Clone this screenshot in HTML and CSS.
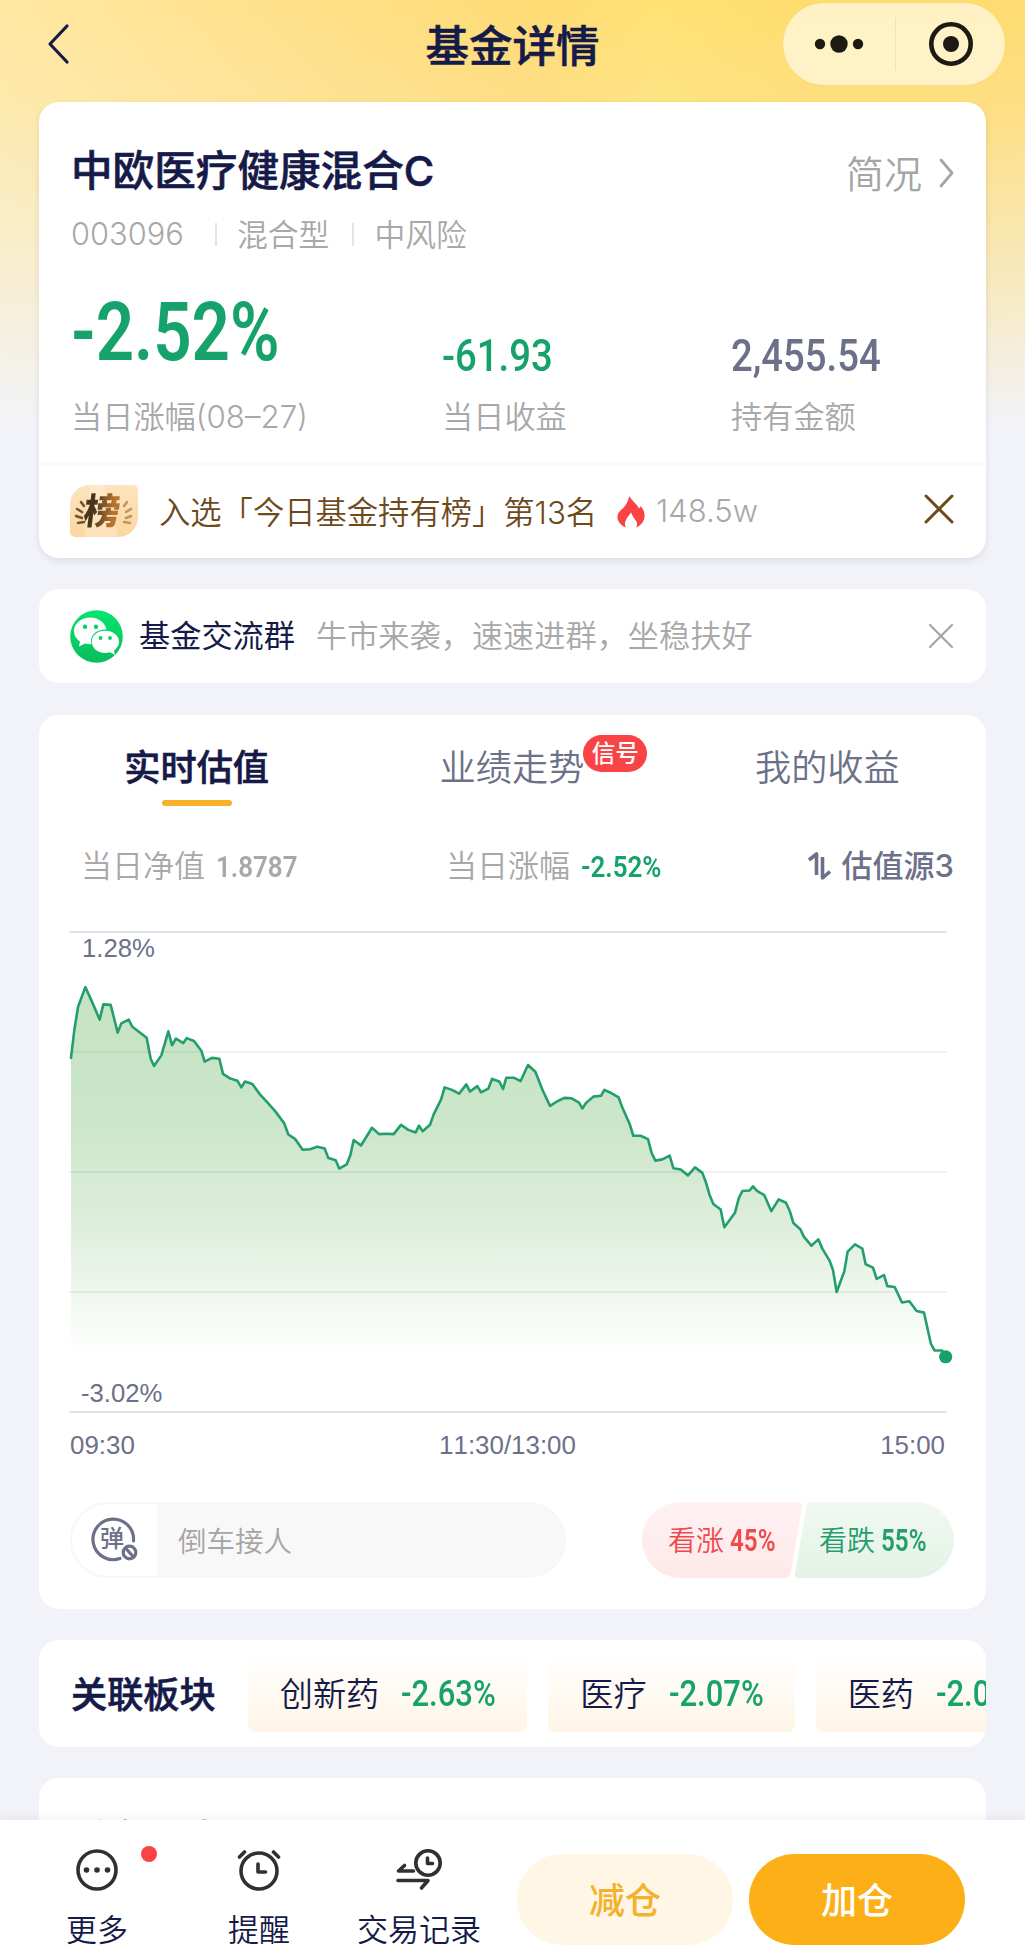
FILE: index.html
```html
<!DOCTYPE html>
<html lang="zh-CN">
<head>
<meta charset="utf-8">
<title>基金详情</title>
<link rel="stylesheet" href="styles.css">
</head>
<body>
<div class="screen">
  <div class="content">
    <header class="nav">
      <svg class="back" width="24" height="42" viewBox="0 0 24 42"><path d="M21 3 4 21 21 39"/></svg>
      <h1>基金详情</h1>
      <div class="capsule">
        <svg width="50" height="24" viewBox="0 0 50 24"><circle cx="6" cy="12" r="5.2"/><circle cx="25" cy="12" r="8.7"/><circle cx="44" cy="12" r="5.2"/></svg>
        <i></i>
        <svg width="46" height="46" viewBox="0 0 46 46"><circle class="ring" cx="23" cy="23" r="19.7"/><circle cx="23" cy="23" r="8"/></svg>
      </div>
    </header>

    <section class="card summary">
      <div class="fund">
        <div class="fund-head">
          <h2>中欧医疗健康混合C</h2>
          <a class="brief">简况<svg width="16" height="30" viewBox="0 0 16 30"><path d="M2 2 13 15 2 28"/></svg></a>
        </div>
        <div class="tags"><span class="code">003096</span><span>混合型</span><span>中风险</span></div>
        <div class="figures">
          <div><b class="num big green">-2.52%</b><span>当日涨幅(08–27)</span></div>
          <div><b class="num mid green">-61.93</b><span>当日收益</span></div>
          <div><b class="num mid slate">2,455.54</b><span>持有金额</span></div>
        </div>
      </div>
      <div class="rank">
        <span class="rank-badge">
          <svg width="68" height="52" viewBox="0 0 68 52">
            <path class="shine" d="M20 0H34L48 52H14Z"/>
            <g class="laurel-l"><path d="M11 17 14 21"/><path d="M7 24 12 27"/><path d="M6 31 12 33"/><path d="M8 38 14 37"/></g>
            <g class="laurel-r"><path d="M57 17 54 21"/><path d="M61 24 56 27"/><path d="M61 31 56 33"/><path d="M60 38 54 37"/></g>
          </svg>
          <em>榜</em>
        </span>
        <span class="rank-text">入选「今日基金持有榜」第13名</span>
        <svg class="flame" width="28" height="32" viewBox="0 0 28 32"><path d="M12.500 0C14.500 5 20 7.500 22 12.500C22.800 12 23.300 11 23.500 10C26.500 13 28 17.500 27.500 21C27 26 23.500 29.500 19.500 31.500C20.500 28 20 25.500 18 23.500C17 22 15.500 20 14 16.500C12 20 8.500 23 8 26.500C7.800 28.500 8.200 30.500 9 31.500C3.500 29.500 0 25 .5 20C1 15 6.500 13 9 8.500C10.800 5.500 11.500 3 12.500 0Z"/></svg>
        <span class="heat">148.5w</span>
        <svg class="close brown" width="30" height="30" viewBox="0 0 30 30"><path d="M2 2 28 28M28 2 2 28"/></svg>
      </div>
    </section>

    <section class="card group">
      <svg width="53" height="53" viewBox="0 0 53 53">
        <defs><linearGradient id="wx" x1="0" y1="0" x2="0" y2="1"><stop offset="0" stop-color="#05e56f"/><stop offset="1" stop-color="#08bd5b"/></linearGradient></defs>
        <circle cx="26.500" cy="26.500" r="26.300" fill="url(#wx)"/>
        <path fill="#fff" d="M20.500 7.500C11 7.500 4 13.500 4 21C4 25.500 6.500 29 10 31.500L9 36.500 15 33.500C17 34 19 34.500 21.500 34.300C19 26 26 19 36.500 19.500C35 12.500 28.500 7.500 20.500 7.500Z"/>
        <path fill="#fff" d="M35 20.800C27.500 20.800 21.800 25.500 21.800 31.800C21.800 38 27.500 43 35 43C36.500 43 38.500 42.700 40 42.200L45 45 44 40.500C47 38.500 49 35.500 49 31.800C49 25.500 43 20.800 35 20.800Z"/>
        <g fill="#08cf64"><circle cx="15" cy="16.800" r="2.200"/><circle cx="26" cy="16.800" r="2.200"/><circle cx="30.500" cy="28" r="1.900"/><circle cx="40" cy="28" r="1.900"/></g>
      </svg>
      <strong>基金交流群</strong>
      <span>牛市来袭，速速进群，坐稳扶好</span>
      <svg class="close grey" width="26" height="26" viewBox="0 0 26 26"><path d="M2 2 24 24M24 2 2 24"/></svg>
    </section>

    <section class="card quote">
      <nav class="tabs">
        <a class="active">实时估值</a>
        <a>业绩走势<sup>信号</sup></a>
        <a>我的收益</a>
      </nav>
      <div class="stats">
        <span class="nav-value">当日净值<b class="num small">1.8787</b></span>
        <span class="change">当日涨幅<b class="num small green">-2.52%</b></span>
        <span class="source"><svg width="25" height="30" viewBox="0 0 25 30"><path d="M2 9 9.500 3V24M15.500 6V27L23 20.500"/></svg>估值源3</span>
      </div>
      <div class="chart">
        <span>1.28%</span>
        <span>-3.02%</span>
        <svg width="876" height="480" viewBox="210 267 2628 1140" preserveAspectRatio="none">
          <defs>
            <linearGradient id="area" gradientUnits="userSpaceOnUse" x1="0" y1="398" x2="0" y2="1276"><stop offset="0" stop-color="#c5e3c3"/><stop offset=".35" stop-color="#cbe6c9"/><stop offset=".62" stop-color="#dcedda"/><stop offset="1" stop-color="#fff"/></linearGradient>
          </defs>
          <path fill="url(#area)" d="M213 566L223 500 234 445 256 398 278 436 299 475 310 439 332 440 353 506 364 484 386 475 397 492 440 518 452 568 462 585 484 560 505 503 516 536 528 520 550 531 560 519 582 526 604 549 614 575 636 566 658 568 669 604 691 615 712 620 724 636 735 622 757 628 779 652 800 670 826 693 853 722 865 748 886 759 908 784 930 783 952 777 974 781 985 804 1007 809 1018 829 1040 819 1051 797 1061 761 1083 774 1116 732 1137 747 1160 746 1181 747 1203 725 1225 737 1247 743 1257 727 1268 740 1290 725 1301 700 1323 665 1334 636 1356 642 1377 651 1399 629 1410 646 1432 633 1443 648 1465 639 1476 616 1498 622 1509 640 1519 613 1541 613 1562 621 1584 583 1606 599 1628 643 1650 680 1672 669 1693 661 1715 662 1737 672 1747 686 1758 673 1780 658 1803 656 1813 642 1835 650 1856 660 1867 684 1889 723 1900 751 1922 751 1944 759 1955 792 1966 810 1987 807 2009 798 2020 828 2042 831 2064 845 2085 826 2107 839 2118 862 2129 892 2140 913 2162 926 2173 968 2205 934 2216 900 2227 882 2249 881 2259 871 2271 882 2293 892 2314 930 2336 902 2358 910 2369 929 2380 958 2401 973 2412 991 2434 1012 2455 997 2467 1019 2489 1048 2499 1070 2510 1122 2533 1073 2543 1026 2565 1009 2587 1019 2597 1056 2619 1064 2630 1091 2652 1082 2662 1108 2684 1110 2706 1147 2728 1144 2750 1167 2772 1171 2793 1246 2804 1261 2826 1261 2837 1276H213Z"/>
          <path class="edge" d="M210 267H2838M210 1407H2838"/>
          <path class="grid" d="M210 552H2838M210 837H2838M210 1122H2838"/>
          <path class="line" d="M213 566L223 500 234 445 256 398 278 436 299 475 310 439 332 440 353 506 364 484 386 475 397 492 440 518 452 568 462 585 484 560 505 503 516 536 528 520 550 531 560 519 582 526 604 549 614 575 636 566 658 568 669 604 691 615 712 620 724 636 735 622 757 628 779 652 800 670 826 693 853 722 865 748 886 759 908 784 930 783 952 777 974 781 985 804 1007 809 1018 829 1040 819 1051 797 1061 761 1083 774 1116 732 1137 747 1160 746 1181 747 1203 725 1225 737 1247 743 1257 727 1268 740 1290 725 1301 700 1323 665 1334 636 1356 642 1377 651 1399 629 1410 646 1432 633 1443 648 1465 639 1476 616 1498 622 1509 640 1519 613 1541 613 1562 621 1584 583 1606 599 1628 643 1650 680 1672 669 1693 661 1715 662 1737 672 1747 686 1758 673 1780 658 1803 656 1813 642 1835 650 1856 660 1867 684 1889 723 1900 751 1922 751 1944 759 1955 792 1966 810 1987 807 2009 798 2020 828 2042 831 2064 845 2085 826 2107 839 2118 862 2129 892 2140 913 2162 926 2173 968 2205 934 2216 900 2227 882 2249 881 2259 871 2271 882 2293 892 2314 930 2336 902 2358 910 2369 929 2380 958 2401 973 2412 991 2434 1012 2455 997 2467 1019 2489 1048 2499 1070 2510 1122 2533 1073 2543 1026 2565 1009 2587 1019 2597 1056 2619 1064 2630 1091 2652 1082 2662 1108 2684 1110 2706 1147 2728 1144 2750 1167 2772 1171 2793 1246 2804 1261 2826 1261 2837 1276"/>
          <ellipse cx="2837" cy="1276" rx="20" ry="15.500" fill="#16a26a"/>
        </svg>
      </div>
      <div class="times"><span>09:30</span><span>11:30/13:00</span><span>15:00</span></div>
      <div class="actions">
        <div class="danmu">
          <span class="danmu-icon">
            <svg width="50" height="50" viewBox="0 0 50 50"><path d="M31 43.500A20.300 20.300 0 1 1 44.500 26"/><circle cx="40.500" cy="37.500" r="6.300"/><path d="M36.500 33 44.500 42"/></svg>
            <em>弹</em>
          </span>
          <span class="hint">倒车接人</span>
        </div>
        <div class="votes">
          <svg width="312" height="76" viewBox="0 0 312 76">
            <defs>
              <linearGradient id="up" x1="0" y1="0" x2="0" y2="1"><stop offset="0" stop-color="#fff1f2"/><stop offset="1" stop-color="#fee9ea"/></linearGradient>
              <linearGradient id="down" x1="0" y1="0" x2="0" y2="1"><stop offset="0" stop-color="#f1f8f2"/><stop offset="1" stop-color="#e4f2e6"/></linearGradient>
            </defs>
            <path fill="url(#up)" d="M38 0H156Q161 0 160.400 5L148.500 71Q147.500 76 143 76H38A38 38 0 0 1 38 0Z"/>
            <path fill="url(#down)" d="M170 0H274A38 38 0 0 1 274 76H157Q152 76 153 71L164.500 5Q165.500 0 170 0Z"/>
          </svg>
          <span class="up">看涨<b class="num vote">45%</b></span>
          <span class="down">看跌<b class="num vote">55%</b></span>
        </div>
      </div>
    </section>

    <section class="card sectors">
      <h3>关联板块</h3>
      <div class="chip">创新药<b class="num rate green">-2.63%</b></div>
      <div class="chip">医疗<b class="num rate green">-2.07%</b></div>
      <div class="chip">医药<b class="num rate green">-2.05%</b></div>
    </section>

    <section class="card next"><h3>重仓涨跌</h3></section>
  </div>

  <footer class="bar">
    <a class="item more">
      <svg width="44" height="44" viewBox="0 0 44 44"><circle cx="22" cy="22" r="19"/><g class="dots"><circle cx="11.500" cy="22" r="2.800"/><circle cx="22" cy="22" r="2.800"/><circle cx="32.500" cy="22" r="2.800"/></g></svg>
      <i class="dot"></i>更多
    </a>
    <a class="item remind">
      <svg width="44" height="44" viewBox="0 0 44 44"><circle cx="22" cy="23" r="18"/><path d="M21 16V24H28.500M2.500 9 7.500 4M41.500 9 36.500 4"/></svg>
      提醒
    </a>
    <a class="item trades">
      <svg width="48" height="44" viewBox="0 0 48 44"><circle cx="33" cy="15" r="12.200"/><path d="M32.500 10V15.500H37.500M18.500 23H3.500L9.500 17.500M3 32.500H33L26.500 40"/></svg>
      交易记录
    </a>
    <button class="sell">减仓</button>
    <button class="buy">加仓</button>
  </footer>
</div>
</body>
</html>
```
FILE: styles.css
```css
* { box-sizing: border-box; }

body {
  margin: 0;
  font-family: Inter, "Noto Sans CJK SC", sans-serif;
  font-weight: 350;
  color: #161a48;
  background: #f2f3f9;
}

svg { display: block; flex: none; fill: none; stroke-linecap: round; stroke-linejoin: round; }
h1, h2, h3 { margin: 0; font-weight: 500; -webkit-text-stroke: .6px currentColor; }
em { font-style: normal; }

.screen {
  display: flex;
  flex-direction: column;
  height: 1957px;
  overflow: hidden;
  background:
    linear-gradient(180deg, rgba(242, 243, 249, 0) 0, rgba(242, 243, 249, .12) 100px, rgba(242, 243, 249, .6) 290px, #f2f3f9 425px),
    linear-gradient(90deg, #ffe8a2 0, #ffdb74 52%, #ffe173 64%, #ffdc6c 80%, #ffdc71 100%);
}

.content {
  flex: 1;
  min-height: 0;
  overflow: hidden;
  padding: 0 39px;
  display: flex;
  flex-direction: column;
}

.nav {
  height: 102px;
  flex: none;
  display: grid;
  grid-template-columns: 1fr auto 1fr;
  align-items: start;
  margin: 0 -19px;
}
.back { margin: 23px 0 0 26px; stroke: #161a48; stroke-width: 3.2; }
.nav h1 { font-size: 43.500px; line-height: 60px; padding-top: 16px; }
.capsule {
  justify-self: end;
  width: 222px;
  height: 82px;
  margin-top: 3px;
  border-radius: 41px;
  background: rgba(255, 250, 229, .72);
  box-shadow: 0 0 0 1px rgba(240, 214, 130, .25);
  display: flex;
  align-items: center;
  padding: 0 31px;
  justify-content: space-between;
}
.capsule svg { fill: #1d1a14; }
.capsule .ring { fill: none; stroke: #1d1a14; stroke-width: 4.600; }
.capsule i { width: 1.500px; height: 52px; background: #efe3bd; margin-left: -1px; }

.card { flex: none; background: #fff; border-radius: 20px; }

.summary { height: 456px; box-shadow: 0 3px 6px rgba(50, 55, 100, .11); display: flex; flex-direction: column; }
.fund { height: 361px; padding: 40px 31px 0 32px; }
.fund-head { display: flex; justify-content: space-between; align-items: center; height: 58px; }
.fund-head h2 { font-size: 41.600px; line-height: 58px; }
.brief { display: flex; align-items: center; gap: 17px; font-size: 38px; color: #a5a5a5; line-height: 58px; padding-top: 6px; }
.brief svg { stroke: #a5a5a5; stroke-width: 2.800; margin-top: -2px; }
.tags { display: flex; align-items: center; height: 40px; margin-top: 14px; font-size: 30.800px; line-height: 40px; color: #a8a8a8; }
.tags .code { width: 144px; }
.tags span + span { border-left: 2px solid #e3e3e3; line-height: 23px; padding-left: 20px; margin-right: 23px; }
.figures { display: grid; grid-template-columns: 371px 289px 1fr; align-items: end; margin-top: 28px; }
.figures span { display: block; font-size: 31.200px; line-height: 44px; color: #a8a8a8; white-space: nowrap; }

.num { font-family: Roboto, sans-serif; font-weight: 500; display: inline-block; transform-origin: 0 50%; white-space: nowrap; }
.green { color: #16a26a; }
.slate { color: #6c7189; }
.big { font-size: 81px; line-height: 100px; height: 100px; transform: scaleX(.83); margin-bottom: 12px; margin-top: 1px; display: block; font-weight: 600; width: 240px; }
.mid { font-size: 43.500px; line-height: 52px; display: block; transform: scaleX(.88); width: 175px; margin-bottom: 12px; }
.small { font-size: 30px; line-height: 40px; margin-left: 11px; width: 92px; transform: scaleX(.865); font-weight: 600; }
.vote { font-size: 31px; line-height: 40px; margin-left: 6px; transform: scaleX(.78); width: 47px; font-weight: 600; }
.rate { font-size: 36px; line-height: 44px; transform: scaleX(.86); width: 94px; margin-left: 22px; }

.rank { height: 95px; border-top: 2px solid #fafafc; display: flex; align-items: center; padding: 0 32px 0 31px; border-radius: 0 0 20px 20px; }
.rank-badge { position: relative; width: 68px; height: 52px; margin-top: 7px; margin-bottom: 9px; border-radius: 20px 5px 20px 5px; background: linear-gradient(180deg, #fde4bd, #fbd6a0); overflow: hidden; flex: none; }
.rank-badge em { position: absolute; left: 14px; top: 5px; font-size: 36px; line-height: 42px; font-weight: 900; transform: skewX(-7deg); background: linear-gradient(90deg, #49351c 25%, #b57431 80%); -webkit-background-clip: text; background-clip: text; color: transparent; }
.shine { fill: #fff2dc; opacity: .4; }
.laurel-l { stroke: #6b5638; stroke-width: 2.600; }
.laurel-r { stroke: #c2955e; stroke-width: 2.600; }
.rank-text { font-size: 31.300px; line-height: 44px; color: #6d4a1c; margin: 3px 0 0 21px; white-space: nowrap; width: 439px; }
.flame { fill: #fa4345; margin-left: 19px; }
.heat { font-size: 31px; color: #a8a8a8; line-height: 44px; margin-left: 11px; margin-top: -2px; }
.close { margin-left: auto; }
.brown { stroke: #6d4a1c; stroke-width: 3; margin-bottom: 5px; }
.grey { stroke: #a5a5a5; stroke-width: 2.200; }

.group { height: 94px; margin-top: 31px; display: flex; align-items: center; padding: 0 32px 0 31px; font-size: 31.200px; line-height: 44px; }
.group strong { font-weight: 400; margin-left: 16px; }
.group span { color: #a8a8a8; margin-left: 21px; }

.quote { height: 894px; margin-top: 32px; padding: 0 32px 0 31px; }
.tabs { display: grid; grid-template-columns: repeat(3, 1fr); margin: 0 -32px 0 -31px; padding: 25px 1px 0 0; height: 116px; text-align: center; font-size: 36.200px; line-height: 56px; color: #6c7189; }
.tabs a { position: relative; }
.tabs .active { font-weight: 500; color: #161a48; -webkit-text-stroke: .6px currentColor; }
.tabs .active::after { content: ""; display: block; width: 70px; height: 6px; margin: 4px auto 0; border-radius: 3px; background: #f9b02b; }
.tabs sup { position: absolute; left: 229px; top: -5px; width: 64px; height: 37px; border-radius: 19px; background: #f94345; color: #fff; font-size: 23.500px; line-height: 37px; font-weight: 500; }
.stats { display: grid; grid-template-columns: 365px 1fr auto; height: 101px; padding: 13px 0 0 11px; font-size: 31px; line-height: 44px; color: #a8a8a8; white-space: nowrap; }
.source { display: flex; align-items: center; gap: 10px; font-weight: 500; color: #6c7189; height: 44px; }
.source svg { stroke: #6c7189; stroke-width: 3.600; stroke-linecap: butt; }
.chart { position: relative; height: 480px; width: 876px; font-family: "Liberation Sans", Arial, sans-serif; font-size: 25.700px; line-height: 30px; color: #6c7189; }
.chart svg { overflow: visible; }
.chart span { position: absolute; left: 12px; top: 1px; z-index: 1; }
.chart span + span { top: auto; bottom: 4px; left: 11px; }
.chart path { vector-effect: non-scaling-stroke; }
.edge { stroke: #e2e2ea; stroke-width: 2; }
.grid { stroke: rgba(70, 80, 90, .08); stroke-width: 2; }
.line { stroke: #239e6c; stroke-width: 2.600; }
.times { display: flex; justify-content: space-between; width: 875px; margin-top: 18px; font-family: "Liberation Sans", Arial, sans-serif; font-size: 25.900px; line-height: 30px; color: #6c7189; font-kerning: none; }
.actions { display: flex; justify-content: space-between; margin-top: 42px; }
.danmu { width: 496px; height: 76px; border-radius: 38px; background: #f8f8f8; border: 2px solid #f7f7f7; display: flex; overflow: hidden; align-items: center; }
.danmu-icon { position: relative; width: 85px; height: 72px; background: #fff; padding: 11px 0 0 17px; }
.danmu-icon svg { stroke: #6c7189; stroke-width: 3.200; }
.danmu-icon em { position: absolute; left: 28px; top: 20px; font-size: 24px; line-height: 30px; font-weight: 500; color: #6c7189; }
.hint { font-size: 28.500px; color: #a5a5a5; margin: -2px 0 0 21px; }
.votes { position: relative; display: flex; width: 312px; height: 76px; align-items: center; font-size: 28px; line-height: 44px; padding-top: 2px; white-space: nowrap; }
.votes svg { position: absolute; left: 0; top: 0; }
.votes span { position: relative; }
.up { color: #ee4a4d; margin-left: 26px; }
.down { color: #239e6c; margin-left: 42px; }

.sectors { height: 107px; margin-top: 31px; padding-left: 32px; display: flex; align-items: center; overflow: hidden; }
h3 { font-size: 36.200px; line-height: 50px; white-space: nowrap; }
.sectors h3 { padding-top: 2px; }
.chip { flex: none; height: 76px; margin-top: 1px; border-radius: 8px; padding: 0 32px; background: linear-gradient(180deg, #fff, #fff5e6); font-size: 33.200px; line-height: 77px; white-space: nowrap; margin-left: 21px; }
h3 + .chip { margin-left: 32px; }

.next { height: 200px; margin-top: 31px; padding: 35px 32px; }

.bar { position: relative; flex: none; height: 137px; background: #fff; box-shadow: 0 -3px 8px rgba(40, 45, 90, .06); display: flex; font-size: 31px; line-height: 44px; white-space: nowrap; }
.item { position: relative; display: flex; flex-direction: column; align-items: center; padding-top: 28px; gap: 16px; flex: none; }
.item svg { stroke: #303030; stroke-width: 3.600; }
.item .dots { fill: #303030; stroke: none; }
.more { width: 62px; margin-left: 66px; }
.remind { width: 62px; margin-left: 100px; }
.trades { width: 124px; margin-left: 67px; }
.dot { position: absolute; left: 75px; top: 26px; width: 16px; height: 16px; border-radius: 50%; background: #f94345; }
.bar button { width: 216px; height: 91px; border: 0; border-radius: 46px; margin-top: 34px; font: 500 36px/50px Inter, "Noto Sans CJK SC", sans-serif; padding: 3px 0 0; }
.sell { background: #fff6e6; color: #f5b02c; margin-left: 36px; }
.buy { background: #fdaf18; color: #fff; margin-left: 16px; }
```
